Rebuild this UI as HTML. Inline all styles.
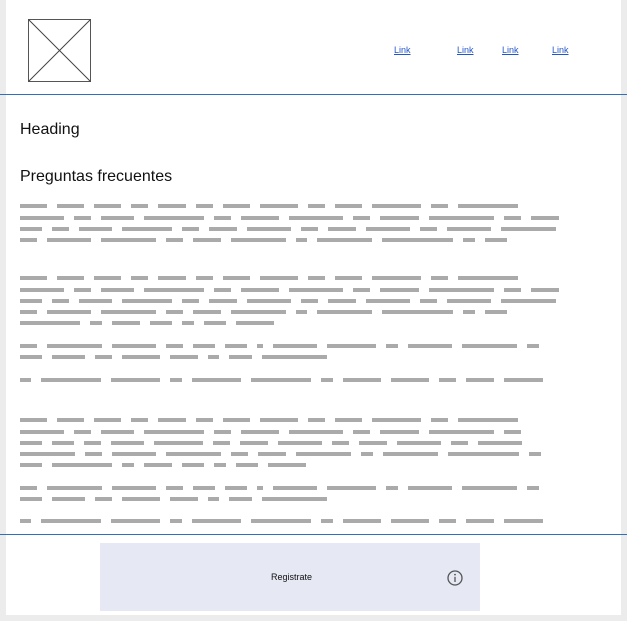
<!DOCTYPE html>
<html><head><meta charset="utf-8"><style>
body{margin:0;width:627px;height:621px;background:#ececec;position:relative;overflow:hidden;font-family:"Liberation Sans",Arial,sans-serif}
.p{position:absolute;left:6px;top:0;width:615px;height:615px;background:#fff}
.hl{position:absolute;left:0;width:627px;height:1px;background:#2f6fc0}
.l{position:absolute;left:20px;display:flex;gap:10px}
.l i{display:block;height:4px;background:#aaa}
a{position:absolute;top:45px;font-size:9px;color:#2255cc;text-decoration:underline}
</style></head><body>
<div class="p"></div>
<svg style="position:absolute;left:28px;top:19px" width="64" height="64"><rect x="0.5" y="0.5" width="62" height="62" fill="none" stroke="#555"/><path d="M0.5 0.5L62.5 62.5M62.5 0.5L0.5 62.5" stroke="#444"/></svg>
<a style="left:394px">Link</a><a style="left:457px">Link</a><a style="left:502px">Link</a><a style="left:552px">Link</a>
<div class="hl" style="top:94px"></div>
<div style="position:absolute;left:20px;top:121px;font-size:16px;color:#111">Heading</div>
<div style="position:absolute;left:20px;top:168px;font-size:16px;color:#111">Preguntas frecuentes</div>

<div class="l" style="top:204px"><i style="width:27px"></i><i style="width:27px"></i><i style="width:27px"></i><i style="width:17px"></i><i style="width:28px"></i><i style="width:17px"></i><i style="width:27px"></i><i style="width:38px"></i><i style="width:17px"></i><i style="width:27px"></i><i style="width:49px"></i><i style="width:17px"></i><i style="width:60px"></i></div>
<div class="l" style="top:216px"><i style="width:44px"></i><i style="width:17px"></i><i style="width:33px"></i><i style="width:60px"></i><i style="width:17px"></i><i style="width:38px"></i><i style="width:54px"></i><i style="width:17px"></i><i style="width:39px"></i><i style="width:65px"></i><i style="width:17px"></i><i style="width:28px"></i></div>
<div class="l" style="top:227px"><i style="width:22px"></i><i style="width:17px"></i><i style="width:33px"></i><i style="width:50px"></i><i style="width:17px"></i><i style="width:28px"></i><i style="width:44px"></i><i style="width:17px"></i><i style="width:28px"></i><i style="width:44px"></i><i style="width:17px"></i><i style="width:44px"></i><i style="width:55px"></i></div>
<div class="l" style="top:238px"><i style="width:17px"></i><i style="width:44px"></i><i style="width:55px"></i><i style="width:17px"></i><i style="width:28px"></i><i style="width:55px"></i><i style="width:11px"></i><i style="width:55px"></i><i style="width:71px"></i><i style="width:12px"></i><i style="width:22px"></i></div>

<div class="l" style="top:276px"><i style="width:27px"></i><i style="width:27px"></i><i style="width:27px"></i><i style="width:17px"></i><i style="width:28px"></i><i style="width:17px"></i><i style="width:27px"></i><i style="width:38px"></i><i style="width:17px"></i><i style="width:27px"></i><i style="width:49px"></i><i style="width:17px"></i><i style="width:60px"></i></div>
<div class="l" style="top:288px"><i style="width:44px"></i><i style="width:17px"></i><i style="width:33px"></i><i style="width:60px"></i><i style="width:17px"></i><i style="width:38px"></i><i style="width:54px"></i><i style="width:17px"></i><i style="width:39px"></i><i style="width:65px"></i><i style="width:17px"></i><i style="width:28px"></i></div>
<div class="l" style="top:299px"><i style="width:22px"></i><i style="width:17px"></i><i style="width:33px"></i><i style="width:50px"></i><i style="width:17px"></i><i style="width:28px"></i><i style="width:44px"></i><i style="width:17px"></i><i style="width:28px"></i><i style="width:44px"></i><i style="width:17px"></i><i style="width:44px"></i><i style="width:55px"></i></div>
<div class="l" style="top:310px"><i style="width:17px"></i><i style="width:44px"></i><i style="width:55px"></i><i style="width:17px"></i><i style="width:28px"></i><i style="width:55px"></i><i style="width:11px"></i><i style="width:55px"></i><i style="width:71px"></i><i style="width:12px"></i><i style="width:22px"></i></div>
<div class="l" style="top:321px"><i style="width:60px"></i><i style="width:12px"></i><i style="width:28px"></i><i style="width:22px"></i><i style="width:12px"></i><i style="width:22px"></i><i style="width:38px"></i></div>

<div class="l" style="top:344px"><i style="width:17px"></i><i style="width:55px"></i><i style="width:44px"></i><i style="width:17px"></i><i style="width:22px"></i><i style="width:22px"></i><i style="width:6px"></i><i style="width:44px"></i><i style="width:49px"></i><i style="width:12px"></i><i style="width:44px"></i><i style="width:55px"></i><i style="width:12px"></i></div>
<div class="l" style="top:355px"><i style="width:22px"></i><i style="width:33px"></i><i style="width:17px"></i><i style="width:38px"></i><i style="width:28px"></i><i style="width:11px"></i><i style="width:23px"></i><i style="width:65px"></i></div>
<div class="l" style="top:378px"><i style="width:11px"></i><i style="width:60px"></i><i style="width:49px"></i><i style="width:12px"></i><i style="width:49px"></i><i style="width:60px"></i><i style="width:12px"></i><i style="width:38px"></i><i style="width:38px"></i><i style="width:17px"></i><i style="width:28px"></i><i style="width:39px"></i></div>

<div class="l" style="top:418px"><i style="width:27px"></i><i style="width:27px"></i><i style="width:27px"></i><i style="width:17px"></i><i style="width:28px"></i><i style="width:17px"></i><i style="width:27px"></i><i style="width:38px"></i><i style="width:17px"></i><i style="width:27px"></i><i style="width:49px"></i><i style="width:17px"></i><i style="width:60px"></i></div>
<div class="l" style="top:430px"><i style="width:44px"></i><i style="width:17px"></i><i style="width:33px"></i><i style="width:60px"></i><i style="width:17px"></i><i style="width:38px"></i><i style="width:54px"></i><i style="width:17px"></i><i style="width:39px"></i><i style="width:65px"></i><i style="width:17px"></i></div>
<div class="l" style="top:441px"><i style="width:22px"></i><i style="width:22px"></i><i style="width:17px"></i><i style="width:33px"></i><i style="width:49px"></i><i style="width:17px"></i><i style="width:28px"></i><i style="width:44px"></i><i style="width:17px"></i><i style="width:28px"></i><i style="width:44px"></i><i style="width:17px"></i><i style="width:44px"></i></div>
<div class="l" style="top:452px"><i style="width:55px"></i><i style="width:17px"></i><i style="width:44px"></i><i style="width:55px"></i><i style="width:17px"></i><i style="width:28px"></i><i style="width:55px"></i><i style="width:12px"></i><i style="width:55px"></i><i style="width:71px"></i><i style="width:12px"></i></div>
<div class="l" style="top:463px"><i style="width:22px"></i><i style="width:60px"></i><i style="width:12px"></i><i style="width:28px"></i><i style="width:22px"></i><i style="width:12px"></i><i style="width:22px"></i><i style="width:38px"></i></div>

<div class="l" style="top:486px"><i style="width:17px"></i><i style="width:55px"></i><i style="width:44px"></i><i style="width:17px"></i><i style="width:22px"></i><i style="width:22px"></i><i style="width:6px"></i><i style="width:44px"></i><i style="width:49px"></i><i style="width:12px"></i><i style="width:44px"></i><i style="width:55px"></i><i style="width:12px"></i></div>
<div class="l" style="top:497px"><i style="width:22px"></i><i style="width:33px"></i><i style="width:17px"></i><i style="width:38px"></i><i style="width:28px"></i><i style="width:11px"></i><i style="width:23px"></i><i style="width:65px"></i></div>
<div class="l" style="top:519px"><i style="width:11px"></i><i style="width:60px"></i><i style="width:49px"></i><i style="width:12px"></i><i style="width:49px"></i><i style="width:60px"></i><i style="width:12px"></i><i style="width:38px"></i><i style="width:38px"></i><i style="width:17px"></i><i style="width:28px"></i><i style="width:39px"></i></div>

<div class="hl" style="top:534px"></div>
<div style="position:absolute;left:100px;top:543px;width:380px;height:68px;background:#e6e8f4"></div>
<div style="position:absolute;left:271px;top:572px;font-size:9px;color:#111">Registrate</div>
<svg style="position:absolute;left:446px;top:569px" width="18" height="18"><circle cx="9" cy="9" r="7" fill="none" stroke="#555" stroke-width="1.3"/><circle cx="9" cy="5.6" r="0.9" fill="#555"/><path d="M9 7.8V13" stroke="#555" stroke-width="1.3"/></svg>
</body></html>
